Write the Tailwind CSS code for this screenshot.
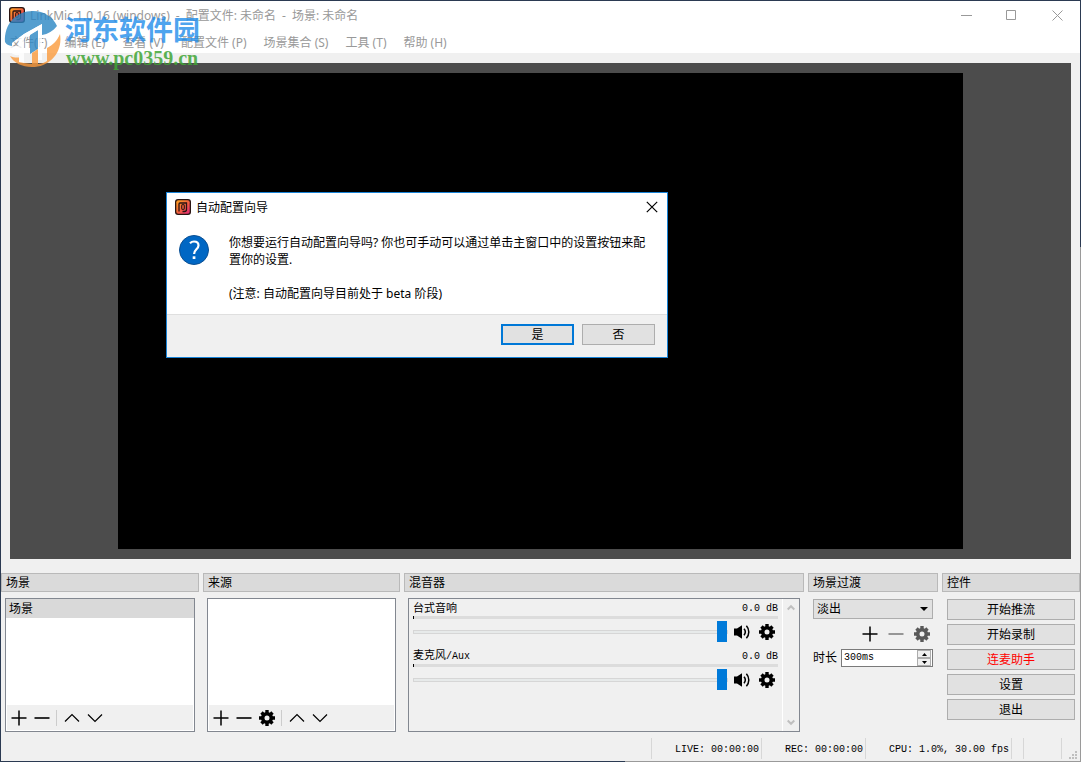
<!DOCTYPE html>
<html lang="zh-CN">
<head>
    <meta charset="UTF-8">
    <meta name="viewport" content="width=device-width, initial-scale=1.0">
    <title>LinkMic 1.0.16 (windows)</title>
    <script src="https://cdn.jsdelivr.net/npm/@tailwindcss/browser@4"></script>
</head>
<body class="relative min-h-screen flex flex-col p-px bg-[linear-gradient(131.5deg,#2b3a52_74%,#9a9a9a_74%)] font-['Noto_Sans','Noto_Sans_CJK_SC',sans-serif] text-[12px] leading-4 text-black">

    <!-- Shared icons -->
    <svg class="absolute size-0">
        <defs>
            <linearGradient id="logoFill" x1="0" y1="0" x2="1" y2="1">
                <stop offset="0" stop-color="#ffa51f" />
                <stop offset="0.5" stop-color="#f4633c" />
                <stop offset="1" stop-color="#e3257b" />
            </linearGradient>
            <symbol id="logo" viewBox="0 0 16 16">
                <rect width="16" height="16" rx="3" fill="#2a1512" />
                <rect x="1.3" y="1.3" width="13.4" height="13.4" rx="2" fill="url(#logoFill)" />
                <path d="M4 12.500V5C4 4.300 4.300 4 5 4h6.500v6.500c0 1.300-.7 2-2 2H7.500" fill="none" stroke="#2a1512" stroke-width="1.300" />
                <rect x="6.700" y="5.500" width="2.600" height="5" rx="1.200" fill="#f4633c" stroke="#2a1512" stroke-width="1.100" />
            </symbol>
            <symbol id="plus" viewBox="0 0 16 16">
                <path d="M0.500 8h15M8 0.500v15" fill="none" stroke="currentColor" stroke-width="1.500" />
            </symbol>
            <symbol id="minus" viewBox="0 0 16 16">
                <path d="M0.500 8h15" fill="none" stroke="currentColor" stroke-width="1.600" />
            </symbol>
            <symbol id="up" viewBox="0 0 16 16">
                <path d="M1 11.500l7-7 7 7" fill="none" stroke="currentColor" stroke-width="1.200" />
            </symbol>
            <symbol id="down" viewBox="0 0 16 16">
                <path d="M1 4.500l7 7 7-7" fill="none" stroke="currentColor" stroke-width="1.200" />
            </symbol>
            <symbol id="gear" viewBox="0 0 16 16">
                <circle cx="8" cy="8" r="4.300" fill="none" stroke="currentColor" stroke-width="3.600" />
                <path d="M8 0v3M8 13v3M0 8h3M13 8h3M2.500 2.500l2 2M11.500 11.500l2 2M13.500 2.500l-2 2M4.500 11.500l-2 2" fill="none" stroke="currentColor" stroke-width="3.400" />
            </symbol>
            <symbol id="speaker" viewBox="0 0 16 16">
                <path d="M0 4.500h3L8 1.300v13.400L3 11.500H0z" fill="currentColor" />
                <path d="M10 4.800c1.500 1.800 1.500 4.600 0 6.400M12.400 1.800c3.200 3.600 3.200 8.800 0 12.400" fill="none" stroke="currentColor" stroke-width="1.500" />
            </symbol>
        </defs>
    </svg>

    <header class="bg-white text-[#999999]">
        <div class="flex h-7 items-center pl-2">
            <svg class="size-4"><use href="#logo" /></svg>
            <h1 class="ml-[5px] flex flex-1 gap-[6px] whitespace-nowrap pt-px">
                <span>LinkMic 1.0.16 (windows)</span>
                <span>-</span>
                <span>配置文件: 未命名</span>
                <span>-</span>
                <span>场景: 未命名</span>
            </h1>
            <button class="flex w-[46px] justify-center" aria-label="最小化">
                <svg class="size-[11px]" viewBox="0 0 11 11"><path d="M0 5.5h11" stroke="currentColor" /></svg>
            </button>
            <button class="flex w-[45px] justify-center" aria-label="最大化">
                <svg class="size-[11px]" viewBox="0 0 11 11"><path d="M.5.5h9v9h-9z" fill="none" stroke="currentColor" /></svg>
            </button>
            <button class="flex w-[46px] justify-center" aria-label="关闭">
                <svg class="size-[11px]" viewBox="0 0 11 11"><path d="M.5.5l10 10M10.500.5l-10 10" stroke="currentColor" /></svg>
            </button>
        </div>
        <nav class="flex h-6 items-center gap-[17px] whitespace-nowrap pl-[9px] pt-1">
            <a href="#">文件(F)</a>
            <a href="#">编辑 (E)</a>
            <a href="#">查看 (V)</a>
            <a href="#">配置文件 (P)</a>
            <a href="#">场景集合 (S)</a>
            <a href="#">工具 (T)</a>
            <a href="#">帮助 (H)</a>
        </nav>
    </header>

    <main class="flex flex-1 flex-col bg-[#f0f0f0]">
        <!-- Preview -->
        <div class="mx-[9px] mt-[10px] flex flex-1 justify-center bg-[#4c4c4c] p-[10px]">
            <div class="w-13/16 bg-black"></div>
        </div>

        <!-- Docks -->
        <div class="mt-[14px] grid grid-cols-[198fr_197fr_400fr_130fr_138fr] gap-1">
            <section class="flex min-w-0 flex-col">
                <h2 class="flex h-[19px] items-center border border-[#b9b9b9] bg-[#dadada] px-1 pt-px">场景</h2>
                <div class="mx-1 mt-[6px] flex h-[134px] flex-col border border-[#828790] bg-white">
                    <ul class="flex-1">
                        <li class="flex h-[19px] items-center bg-[#d9d9d9] px-[3px]">场景</li>
                    </ul>
                    <div class="m-px flex h-[25px] items-center bg-[#f0f0f0]">
                        <button class="flex w-[23px] justify-center" aria-label="添加场景"><svg class="size-4"><use href="#plus" /></svg></button>
                        <button class="flex w-[23px] justify-center" aria-label="移除场景"><svg class="size-4"><use href="#minus" /></svg></button>
                        <span class="mx-[3px] h-4 w-px bg-[#cccccc]"></span>
                        <button class="flex w-[23px] justify-center" aria-label="上移"><svg class="size-4"><use href="#up" /></svg></button>
                        <button class="flex w-[23px] justify-center" aria-label="下移"><svg class="size-4"><use href="#down" /></svg></button>
                    </div>
                </div>
            </section>

            <section class="flex min-w-0 flex-col">
                <h2 class="flex h-[19px] items-center border border-[#b9b9b9] bg-[#dadada] px-1 pt-px">来源</h2>
                <div class="mx-1 mt-[6px] flex h-[134px] flex-col border border-[#828790] bg-white">
                    <ul class="flex-1"></ul>
                    <div class="m-px flex h-[25px] items-center bg-[#f0f0f0]">
                        <button class="flex w-[23px] justify-center" aria-label="添加来源"><svg class="size-4"><use href="#plus" /></svg></button>
                        <button class="flex w-[23px] justify-center" aria-label="移除来源"><svg class="size-4"><use href="#minus" /></svg></button>
                        <button class="flex w-[23px] justify-center" aria-label="来源属性"><svg class="size-4"><use href="#gear" /></svg></button>
                        <span class="mx-[3px] h-4 w-px bg-[#cccccc]"></span>
                        <button class="flex w-[23px] justify-center" aria-label="上移"><svg class="size-4"><use href="#up" /></svg></button>
                        <button class="flex w-[23px] justify-center" aria-label="下移"><svg class="size-4"><use href="#down" /></svg></button>
                    </div>
                </div>
            </section>

            <section class="flex min-w-0 flex-col">
                <h2 class="flex h-[19px] items-center border border-[#b9b9b9] bg-[#dadada] px-1 pt-px">混音器</h2>
                <div class="mx-1 mt-[6px] flex h-[134px] border border-[#828790]">
                    <div class="min-w-0 flex-1 pl-1 pr-1 pt-px">
                        <div class="h-12">
                            <div class="flex h-4 items-center justify-between pt-px font-['Liberation_Mono','Noto_Sans_CJK_SC',monospace]">
                                <label for="desktopVolume" class="text-[11px]">台式音响</label>
                                <span class="text-[10px]">0.0 dB</span>
                            </div>
                            <div class="h-[3px] border-l border-black bg-[#dcdcdc]"></div>
                            <div class="flex h-[26px] items-center pr-[3px]">
                                <input id="desktopVolume" type="range" min="0" max="100" value="100" class="h-[21px] min-w-0 flex-1 appearance-none bg-transparent [&::-webkit-slider-runnable-track]:h-1 [&::-webkit-slider-runnable-track]:border [&::-webkit-slider-runnable-track]:border-[#d6d6d6] [&::-webkit-slider-runnable-track]:bg-[#e7eaea] [&::-webkit-slider-thumb]:-mt-[10px] [&::-webkit-slider-thumb]:h-[21px] [&::-webkit-slider-thumb]:w-[10px] [&::-webkit-slider-thumb]:appearance-none [&::-webkit-slider-thumb]:bg-[#007ad9]">
                                <button class="ml-[6px]" aria-label="静音"><svg class="size-4"><use href="#speaker" /></svg></button>
                                <button class="ml-[9px]" aria-label="音频设置"><svg class="size-4"><use href="#gear" /></svg></button>
                            </div>
                        </div>
                        <div class="h-12">
                            <div class="flex h-4 items-center justify-between pt-px font-['Liberation_Mono','Noto_Sans_CJK_SC',monospace]">
                                <label for="micVolume" class="text-[11px]">麦克风<span class="text-[10px]">/Aux</span></label>
                                <span class="text-[10px]">0.0 dB</span>
                            </div>
                            <div class="h-[3px] border-l border-black bg-[#dcdcdc]"></div>
                            <div class="flex h-[26px] items-center pr-[3px]">
                                <input id="micVolume" type="range" min="0" max="100" value="100" class="h-[21px] min-w-0 flex-1 appearance-none bg-transparent [&::-webkit-slider-runnable-track]:h-1 [&::-webkit-slider-runnable-track]:border [&::-webkit-slider-runnable-track]:border-[#d6d6d6] [&::-webkit-slider-runnable-track]:bg-[#e7eaea] [&::-webkit-slider-thumb]:-mt-[10px] [&::-webkit-slider-thumb]:h-[21px] [&::-webkit-slider-thumb]:w-[10px] [&::-webkit-slider-thumb]:appearance-none [&::-webkit-slider-thumb]:bg-[#007ad9]">
                                <button class="ml-[6px]" aria-label="静音"><svg class="size-4"><use href="#speaker" /></svg></button>
                                <button class="ml-[9px]" aria-label="音频设置"><svg class="size-4"><use href="#gear" /></svg></button>
                            </div>
                        </div>
                    </div>
                    <div class="flex w-[17px] flex-col items-center justify-between border-l border-white py-[5px] text-[#bfbfbf]">
                        <button aria-label="向上滚动"><svg class="h-2 w-2" viewBox="0 0 8 8"><path d="M.7 5.500L4 2.200l3.300 3.300" fill="none" stroke="currentColor" stroke-width="2" /></svg></button>
                        <button aria-label="向下滚动"><svg class="h-2 w-2" viewBox="0 0 8 8"><path d="M.7 2.500L4 5.800l3.300-3.300" fill="none" stroke="currentColor" stroke-width="2" /></svg></button>
                    </div>
                </div>
            </section>

            <section class="flex min-w-0 flex-col">
                <h2 class="flex h-[19px] items-center border border-[#b9b9b9] bg-[#dadada] px-1 pt-px">场景过渡</h2>
                <div class="mt-[7px] flex flex-col px-[5px]">
                    <div class="relative">
                        <select aria-label="场景过渡" class="block h-5 w-full appearance-none border border-[#adadad] bg-[#e1e1e1] px-[3px] leading-4">
                            <option>淡出</option>
                        </select>
                        <svg class="pointer-events-none absolute right-[5px] top-2 h-1 w-2" viewBox="0 0 8 4"><path d="M0 0h8L4 4z" /></svg>
                    </div>
                    <div class="flex h-[30px] items-center justify-end gap-[10px] pr-[3px]">
                        <button aria-label="添加过渡"><svg class="size-4"><use href="#plus" /></svg></button>
                        <button class="text-[#808080]" aria-label="移除过渡" disabled><svg class="size-4"><use href="#minus" /></svg></button>
                        <button class="text-[#595959]" aria-label="过渡属性"><svg class="size-4"><use href="#gear" /></svg></button>
                    </div>
                    <div class="flex items-center">
                        <label for="duration" class="whitespace-nowrap">时长</label>
                        <div class="ml-1 flex h-[18px] min-w-0 flex-1 border border-[#7a7a7a] bg-white">
                            <input id="duration" type="text" value="300ms" class="w-0 min-w-0 flex-1 px-[2px] font-['Liberation_Mono',monospace] text-[10px] outline-none">
                            <div class="flex w-[15px] flex-col pr-px">
                                <button class="flex flex-1 items-center justify-center border border-[#adadad] bg-[#f0f0f0]" aria-label="增加"><svg class="h-[3px] w-[5px]" viewBox="0 0 5 3"><path d="M0 3h5L2.500 0z" /></svg></button>
                                <button class="flex flex-1 items-center justify-center border border-[#adadad] bg-[#f0f0f0]" aria-label="减少"><svg class="h-[3px] w-[5px]" viewBox="0 0 5 3"><path d="M0 0h5L2.500 3z" /></svg></button>
                            </div>
                        </div>
                    </div>
                </div>
            </section>

            <section class="flex min-w-0 flex-col">
                <h2 class="flex h-[19px] items-center border border-[#b9b9b9] bg-[#dadada] px-1 pt-px">控件</h2>
                <div class="mt-[7px] flex flex-col gap-1 px-[5px]">
                    <button class="h-[21px] border border-[#adadad] bg-[#e1e1e1] pt-px">开始推流</button>
                    <button class="h-[21px] border border-[#adadad] bg-[#e1e1e1] pt-px">开始录制</button>
                    <button class="h-[21px] border border-[#adadad] bg-[#e1e1e1] pt-px text-[#ff0000]">连麦助手</button>
                    <button class="h-[21px] border border-[#adadad] bg-[#e1e1e1] pt-px">设置</button>
                    <button class="h-[21px] border border-[#adadad] bg-[#e1e1e1] pt-px">退出</button>
                </div>
            </section>
        </div>

        <!-- Status bar -->
        <footer class="mt-[6px] flex h-[23px] justify-end whitespace-nowrap pb-[2px] font-['Liberation_Mono',monospace] text-[10px] leading-[23px]">
            <span class="border-x border-[#d7d7d7] pl-[23px] pr-[2px]">LIVE: 00:00:00</span>
            <span class="border-r border-[#d7d7d7] pl-[23px] pr-[2px]">REC: 00:00:00</span>
            <span class="border-r border-[#d7d7d7] pl-[23px] pr-[2px]">CPU: 1.0%, 30.00 fps</span>
            <span class="w-3 border-r border-[#d7d7d7]"></span>
            <span class="w-[38px] border-r border-[#d7d7d7]"></span>
            <span class="flex w-[18px] items-end justify-end pr-[3px]">
                <svg class="size-2" viewBox="0 0 8 8"><path d="M6 0h2v2H6zM3 3h2v2H3zM6 3h2v2H6zM0 6h2v2H0zM3 6h2v2H3zM6 6h2v2H6z" fill="#bfbfbf" /></svg>
            </span>
        </footer>
    </main>

    <!-- Auto-configuration dialog -->
    <div role="dialog" aria-labelledby="dialogTitle" class="absolute left-[166px] top-[192px] w-[502px] border border-[#1883d7] bg-white">
        <div class="flex h-7 items-center pl-2 pr-[9px]">
            <svg class="size-4"><use href="#logo" /></svg>
            <h2 id="dialogTitle" class="ml-[5px] flex-1 pt-px">自动配置向导</h2>
            <button aria-label="关闭"><svg class="size-3" viewBox="0 0 12 12"><path d="M.8.8l10.400 10.400M11.200.8L.8 11.200" stroke="#000" stroke-width="1.200" /></svg></button>
        </div>
        <div class="flex h-[93px] gap-5 pl-3 pt-[13px]">
            <svg class="mt-px size-[30px] shrink-0" viewBox="0 0 30 30">
                <circle cx="15" cy="15" r="14.500" fill="#0067c4" stroke="#0b4f92" />
                <path d="M11 8.200c1.100-1.100 2.400-1.700 4-1.700 2.600 0 4.500 1.400 4.500 3.900 0 3.800-4.400 4.200-4.400 8.600" fill="none" stroke="#fff" stroke-width="2.200" />
                <rect x="13.700" y="21.300" width="2.700" height="2.700" fill="#fff" />
            </svg>
            <p class="whitespace-nowrap leading-[17px]">
                你想要运行自动配置向导吗? 你也可手动可以通过单击主窗口中的设置按钮来配<br>置你的设置.<br><br>(注意: 自动配置向导目前处于 beta 阶段)
            </p>
        </div>
        <div class="flex h-[43px] items-start justify-end gap-2 border-t border-[#dfdfdf] bg-[#f0f0f0] pr-3 pt-[9px]">
            <button class="h-[21px] w-[73px] border-2 border-[#0078d7] bg-[#e1e1e1]">是</button>
            <button class="h-[21px] w-[73px] border border-[#adadad] bg-[#e1e1e1]">否</button>
        </div>
    </div>

    <!-- Site watermark -->
    <div class="pointer-events-none absolute left-1 top-[10px] flex gap-[3px] whitespace-nowrap">
        <svg class="size-[58px] opacity-80" viewBox="0 0 58 58">
            <path d="M1 32C0 14 12 1 29 1c11 0 20 6 24 15-4 5-9 8-15 9V14L20 24 8 33v4c-3 0-5-2-7-5z" fill="#2a86c4" />
            <path d="M26 25l8-5v19l-8 5z" fill="#2a86c4" />
            <path d="M56 24c3 18-10 33-28 33-10 0-18-4-22-11 5 2 9 2 14 0v7l8 1V43l6-4v15c3 0 6-1 9-3V38c6-3 10-7 13-14z" fill="#fb9a3c" />
            <path d="M2 34c6 3 11 3 16 0v10c-6 3-12 1-16-10z" fill="#fff" />
            <path d="M8 33l12-9 18-10v36h-4V20l-14 8v25l-5-1V31z" fill="#fff" />
        </svg>
        <div>
            <p class="mt-1 text-[27px] font-bold leading-8 text-[#1d8bea]/80">河东软件园</p>
            <p class="pl-px font-['Liberation_Serif',serif] text-[20px] font-bold leading-6 text-[#3fa535]/85">www.pc0359.cn</p>
        </div>
    </div>
</body>
</html>
